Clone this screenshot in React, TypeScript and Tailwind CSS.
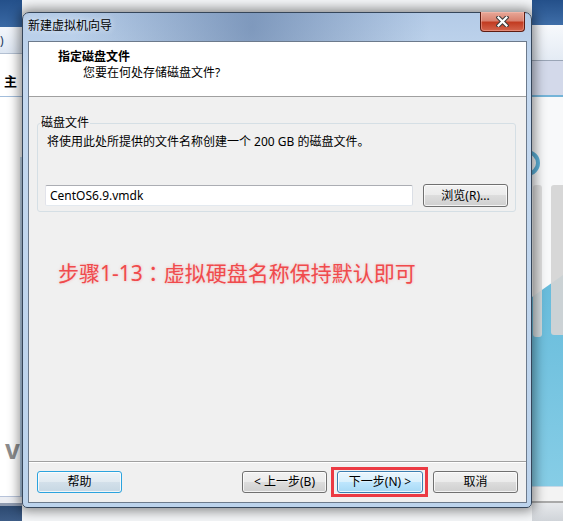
import React from "react";

type BtnVariant = "normal" | "hot" | "focus";

const btnStyles: Record<BtnVariant, string> = {
  normal:
    "border-[#707070] bg-[linear-gradient(to_bottom,#f2f2f2_0%,#ebebeb_50%,#dddddd_50%,#cfcfcf_100%)]",
  hot: "border-[#3c7fb1] bg-[linear-gradient(to_bottom,#eaf6fd_0%,#d9f0fc_50%,#bee6fd_50%,#a7d9f5_100%)]",
  focus:
    "border-[#2ba3de] bg-[linear-gradient(to_bottom,#ecf3f8_0%,#e1eaf1_50%,#d3e0ea_50%,#c6d7e3_100%)]",
};

function WinButton({
  children,
  variant = "normal",
  className = "",
}: {
  children: React.ReactNode;
  variant?: BtnVariant;
  className?: string;
}) {
  return (
    <button
      className={`flex h-[22px] items-center justify-center rounded-[3px] border text-[12px] leading-none text-black shadow-[inset_0_0_0_1px_rgba(255,255,255,0.75)] ${btnStyles[variant]} ${className}`}
    >
      {children}
    </button>
  );
}

function LeftPane() {
  return (
    <div className="flex w-[22px] flex-col overflow-hidden">
      <div className="h-[27px] bg-gradient-to-b from-[#24508a] to-[#3a69a4]" />
      <div className="flex h-[26px] items-center bg-gradient-to-b from-[#f3f6fb] to-[#dde6f2] pt-[1px] text-[12px] leading-none text-[#1d3a60]">
        )
      </div>
      <div className="h-px bg-[#b3c0d2]" />
      <div className="h-[42px] whitespace-nowrap bg-white pl-[4px] pt-[19px] text-[13px] font-bold leading-[16px] text-black">
        主
      </div>
      <div className="h-px bg-[#a3bedc]" />
      <div className="flex flex-1">
        <div className="flex flex-1 flex-col justify-end bg-white pb-[32px] pl-[5px]">
          <span className="font-['Liberation_Sans',sans-serif] text-[27px] font-bold leading-[28px] text-[#8c8c8c]">
            v
          </span>
        </div>
        <div className="flex w-[3px] flex-col">
          <div className="h-[60px] bg-white" />
          <div className="flex-1 bg-gradient-to-b from-[#c9def2] to-[#b3cfec]" />
        </div>
      </div>
      <div className="h-px bg-[#b7c3da]" />
      <div className="h-[6px] bg-[#eceef3]" />
      <div className="h-[3px] bg-[#8f9bb0]" />
      <div className="h-[15px] bg-gradient-to-b from-[#2c4970] to-[#3d5c86]" />
    </div>
  );
}

function RightPane() {
  return (
    <div className="flex w-[31px] flex-col overflow-hidden">
      <div className="h-[25px] bg-gradient-to-b from-[#24508a] to-[#3f6ea8]" />
      <div className="h-[35px] bg-gradient-to-b from-[#f7f9fc] to-[#e4ebf4]" />
      <div className="h-px bg-[#9aa5b6]" />
      <div className="h-[34px] bg-[#d3d9ea]" />
      <div className="h-[2px] bg-[#74b4d8]" />
      <svg className="flex-1" width="31" height="389" viewBox="0 0 31 389">
        <defs>
          <linearGradient id="blueArea" x1="0" y1="0" x2="0" y2="1">
            <stop offset="0" stopColor="#66bbdb" />
            <stop offset="1" stopColor="#86cde6" />
          </linearGradient>
        </defs>
        <rect x="0" y="0" width="31" height="389" fill="#f8f9fa" />
        <circle cx="-5" cy="66" r="11" fill="none" stroke="#5db2da" strokeWidth="4" />
        <polygon points="0,200 31,178 31,389 0,389" fill="url(#blueArea)" />
        <rect x="1" y="88" width="9" height="152" rx="3" fill="#dcdcdc" opacity="0.9" />
        <rect x="19" y="88" width="16" height="150" rx="3" fill="#d4d4d4" opacity="0.92" />
      </svg>
      <div className="h-px bg-[#c6d8e6]" />
      <div className="h-[14px] bg-[#f3f3f3]" />
      <div className="h-[2px] bg-[#a9a9a9]" />
      <div className="h-[18px] bg-gradient-to-b from-[#e7e9ec] to-[#d0d4d9]" />
    </div>
  );
}

function CloseGlyph() {
  return (
    <svg width="13" height="11" viewBox="0 0 13 11">
      <path d="M2.5 1.5 L10.5 9.5 M10.5 1.5 L2.5 9.5" stroke="#3b3b3b" strokeWidth="4.2" strokeLinecap="square" />
      <path d="M2.5 1.5 L10.5 9.5 M10.5 1.5 L2.5 9.5" stroke="#ffffff" strokeWidth="2.2" strokeLinecap="square" />
    </svg>
  );
}

function Wizard() {
  return (
    <div className="absolute left-[22px] top-[12px] flex h-[496px] w-[510px] flex-col rounded-t-[7px] rounded-b-[5px] border border-[#36465a] bg-[radial-gradient(ellipse_at_45%_3%,rgba(70,100,145,0.5),transparent_45%),linear-gradient(to_bottom,#b4cbe7,#c4d8ef_12%,#bcd3ec)] pb-[4px] pl-[5px] pr-[4px] shadow-[0_0_12px_3px_rgba(0,0,0,0.45)]">
      {/* title bar */}
      <div className="flex h-[28px] items-start justify-between">
        <span className="pt-[5px] text-[12px] leading-[16px] text-black [text-shadow:0_0_6px_rgba(255,255,255,0.95)]">
          新建虚拟机向导
        </span>
        <div className="mr-[2px] mt-[-1px] flex h-[20px] w-[45px] items-center justify-center rounded-b-[4px] border border-t-0 border-[#5e1c12] bg-[linear-gradient(to_bottom,#e8a898_0%,#d98270_45%,#c23c22_55%,#d4654d_100%)] shadow-[inset_0_0_0_1px_rgba(255,200,190,0.4)]">
          <CloseGlyph />
        </div>
      </div>

      {/* client area */}
      <div className="flex flex-1 flex-col border border-[#6c7a8c] bg-[#f0f0f0]">
        <div className="h-[55px] border-b border-[#a0a0a0] bg-white pl-[29px] pt-[7px] text-[12px] leading-[16px] text-black">
          <div className="font-bold">指定磁盘文件</div>
          <div className="ml-[25px]">您要在何处存储磁盘文件?</div>
        </div>

        <div className="flex flex-1 flex-col px-[8px] pr-[10px] pt-[26px]">
          <div className="relative rounded-[3px] border border-[#d5dfe5] pb-[4px] pl-[7px] pr-[7px] pt-[10px]">
            <span className="absolute left-[2px] top-[-9px] bg-[#f0f0f0] px-[1px] text-[12px] leading-[16px] text-black">
              磁盘文件
            </span>
            <p className="ml-[2px] text-[12px] leading-[16px] text-black">
              将使用此处所提供的文件名称创建一个 200 GB 的磁盘文件。
            </p>
            <div className="mt-[34px] flex h-[23px] items-center gap-[10px]">
              <div className="flex h-[21px] flex-1 items-center rounded-[2px] border border-[#abadb3] border-b-[#e3e9ef] border-l-[#e2e3ea] border-r-[#dbdfe6] bg-white pl-[4px] text-[12px] text-black">
                CentOS6.9.vmdk
              </div>
              <WinButton className="h-[23px] w-[85px]">浏览(R)...</WinButton>
            </div>
          </div>

          <p className="ml-[21px] mt-[48px] text-[21px] leading-[24px] text-[#f04a4c] [text-shadow:0_0_3px_rgba(240,80,80,0.35)]">
            步骤1-13<span className="font-['Noto_Sans_CJK_JP',sans-serif]">：</span>虚拟硬盘名称保持默认即可
          </p>
        </div>

        <div className="flex h-[41px] items-start border-t border-[#a0a0a0] px-[8px] pt-[9px] shadow-[inset_0_1px_0_#ffffff]">
          <WinButton variant="focus" className="w-[85px]">
            帮助
          </WinButton>
          <div className="flex-1" />
          <div className="flex gap-[10px]">
            <WinButton className="w-[85px]">&lt; 上一步(B)</WinButton>
            <div className="relative">
              <WinButton variant="hot" className="w-[86px]">
                下一步(N) &gt;
              </WinButton>
              <span className="pointer-events-none absolute -bottom-[4px] -left-[6px] -right-[5px] -top-[4px] border-[3px] border-[#ec3a43]" />
            </div>
            <WinButton className="w-[85px]">取消</WinButton>
          </div>
        </div>
      </div>
    </div>
  );
}

export default function App() {
  return (
    <div className="relative h-[521px] w-[563px] overflow-hidden bg-white font-['Noto_Sans','Noto_Sans_CJK_SC',sans-serif]">
      <div className="flex h-full">
        <LeftPane />
        <div className="flex-1 bg-[#f4f6f8]" />
        <RightPane />
      </div>
      <Wizard />
    </div>
  );
}
